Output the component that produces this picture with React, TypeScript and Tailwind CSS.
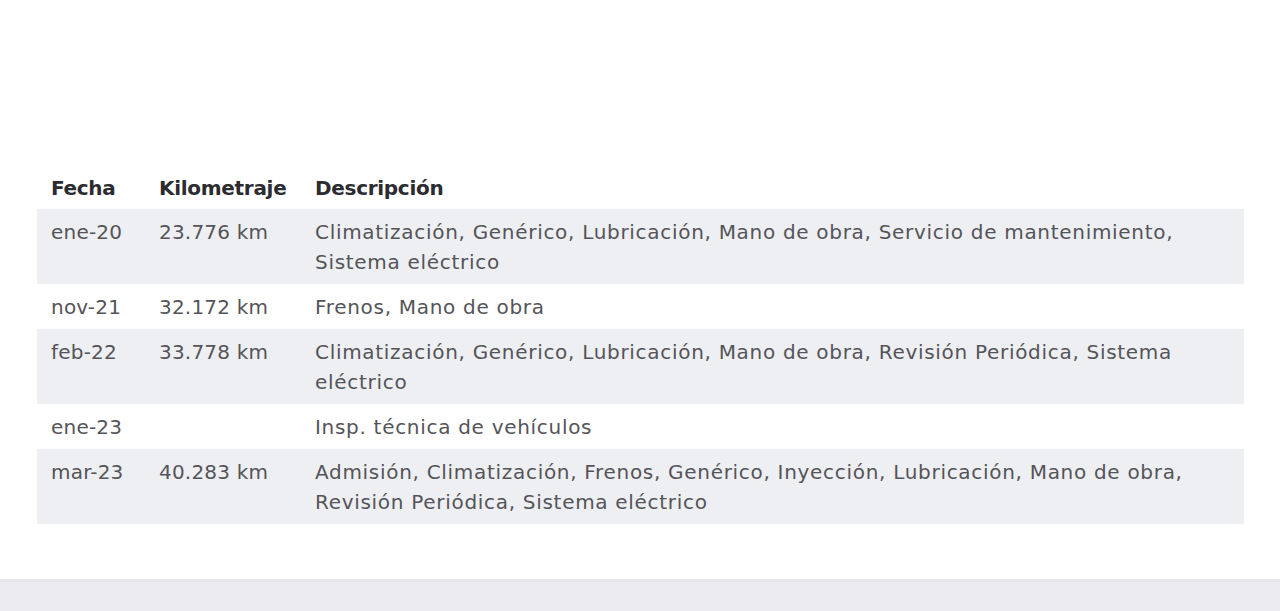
import React from 'react';

interface Fila {
    fecha: string;
    km: string;
    descripcion: string;
}

const filas: Fila[] = [
    { fecha: 'ene-20', km: '23.776 km', descripcion: 'Climatización, Genérico, Lubricación, Mano de obra, Servicio de mantenimiento, Sistema eléctrico' },
    { fecha: 'nov-21', km: '32.172 km', descripcion: 'Frenos, Mano de obra' },
    { fecha: 'feb-22', km: '33.778 km', descripcion: 'Climatización, Genérico, Lubricación, Mano de obra, Revisión Periódica, Sistema eléctrico' },
    { fecha: 'ene-23', km: '', descripcion: 'Insp. técnica de vehículos' },
    { fecha: 'mar-23', km: '40.283 km', descripcion: 'Admisión, Climatización, Frenos, Genérico, Inyección, Lubricación, Mano de obra, Revisión Periódica, Sistema eléctrico' },
];

const App: React.FC = () => {
    return (
        <div className="min-h-[611px] bg-white flex flex-col" style={{ fontFamily: '"DejaVu Sans", sans-serif' }}>
            <div className="flex-1 pt-[165px] px-[37px] pr-[36px]">
                <table className="w-full border-collapse text-[20px] leading-[30px] text-[#545459]">
                    <thead>
                        <tr className="text-left text-[#2b2b30]">
                            <th className="w-[108px] pl-[14px] pt-2 pb-[6px] font-bold tracking-[-0.3px]">Fecha</th>
                            <th className="w-[156px] pl-[14px] pt-2 pb-[6px] font-bold tracking-[-0.3px]">Kilometraje</th>
                            <th className="pl-[14px] pt-2 pb-[6px] font-bold tracking-[-0.3px]">Descripción</th>
                        </tr>
                    </thead>
                    <tbody>
                        {filas.map((f, i) => (
                            <tr key={i} className={i % 2 === 0 ? 'bg-[#eeeff2]' : 'bg-white'}>
                                <td className="pl-[14px] py-[7.5px] align-top tracking-[0.2px]">{f.fecha}</td>
                                <td className="pl-[14px] py-[7.5px] align-top tracking-[0.2px]">{f.km}</td>
                                <td className="pl-[14px] pr-[14px] py-[7.5px] align-top tracking-[0.7px]">{f.descripcion}</td>
                            </tr>
                        ))}
                    </tbody>
                </table>
            </div>
            <div className="h-[32px] bg-[#ececf0] border-t-[3px] border-[#e6e6ea]"></div>
        </div>
    );
};

export default App;
